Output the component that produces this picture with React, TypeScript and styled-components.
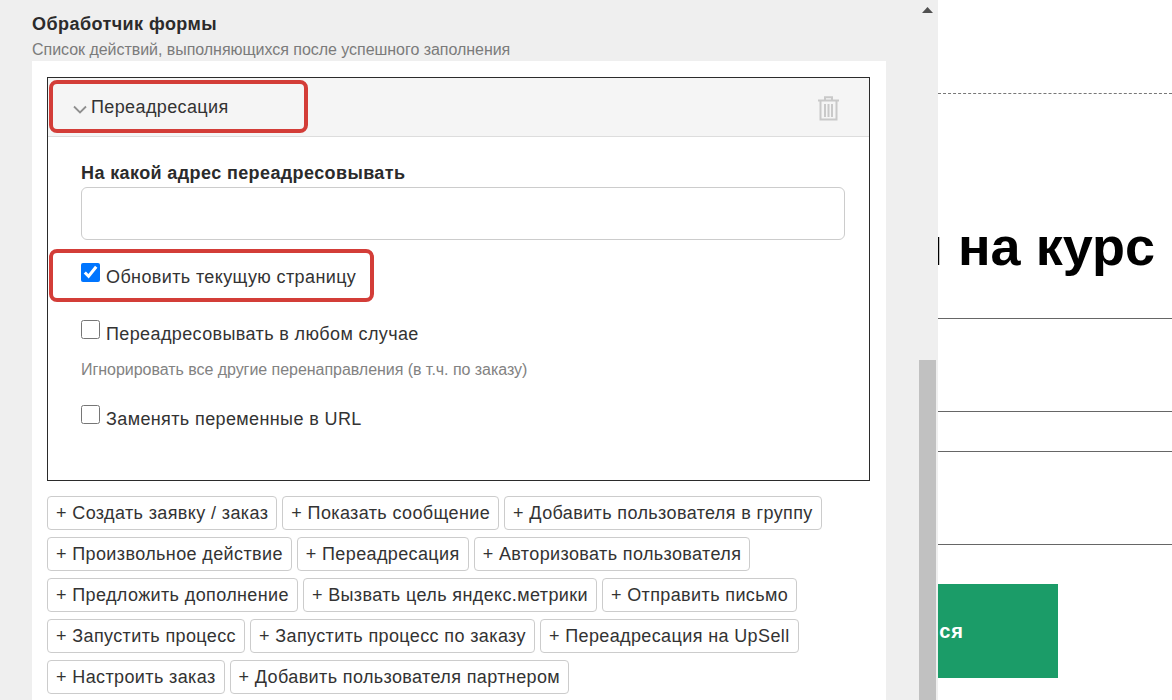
import React from "react";
import styled, { createGlobalStyle } from "styled-components";

const Global = createGlobalStyle`
  html, body { margin: 0; padding: 0; background: #fff; }
  body { font-family: "Liberation Sans", Arial, sans-serif; color: #333; overflow: hidden; }
  * { box-sizing: border-box; }
`;
const Page = styled.div`
  display: flex;
  width: 1172px;
  height: 700px;
  overflow: hidden;
`;
const Panel = styled.div`
  display: flex;
  width: 938px;
  height: 700px;
  flex: none;
  background: #efefef;
  position: relative;
  z-index: 1;
`;
const Content = styled.div`
  width: 919px;
  padding: 14px 33px 0 32px;
`;
const Title = styled.div`
  font-size: 18px;
  line-height: 21px;
  font-weight: 700;
  letter-spacing: 0.44px;
  color: #2b2b2b;
`;
const Subtitle = styled.div`
  font-size: 16px;
  line-height: 20px;
  margin-top: 5px;
  letter-spacing: -0.04px;
  color: #7b7b7b;
  height: 21px;
`;
const Card = styled.div`
  background: #fff;
  padding: 16px 16px 0 15px;
  height: 640px;
`;
const ActionBox = styled.div`
  position: relative;
  border: 1px solid #2b2b2b;
  height: 404px;
`;
const ActionHead = styled.div`
  display: flex;
  align-items: center;
  height: 59px;
  padding: 0 30px 0 25px;
  background: #f5f5f5;
  border-bottom: 1px solid #ddd;
  font-size: 18px;
  letter-spacing: 0.38px;
  color: #333;
`;
const Chevron = styled.svg`
  width: 14px;
  height: 9px;
  margin: 5px 4px 0 0;
  flex: none;
`;
const HeadTitle = styled.span`
  flex: 1;
`;
const Trash = styled.svg`
  width: 21px;
  height: 25px;
  flex: none;
  margin: 3px 0 0 0;
`;
const ActionBody = styled.div`
  padding: 25px 24px 0 33px;
`;
const Label = styled.div`
  font-size: 18px;
  font-weight: 700;
  line-height: 22px;
  letter-spacing: 0.39px;
  color: #2b2b2b;
`;
const TextInput = styled.input`
  display: block;
  width: 100%;
  height: 53px;
  margin-top: 3px;
  border: 1px solid #ccc;
  border-radius: 6px;
  background: #fff;
  outline: none;
`;
const CheckRow = styled.label<{ $top: number }>`
  display: flex;
  align-items: flex-start;
  margin-top: ${(p) => p.$top}px;
  font-size: 18px;
  line-height: 22px;
  letter-spacing: 0.38px;
  color: #333;
`;
const Check = styled.input`
  width: 19px;
  height: 19px;
  margin: 0 6px 0 0;
  flex: none;
  accent-color: #0075ff;
`;
const CheckText = styled.span`
  margin-top: 3px;
`;
const Hint = styled.div`
  font-size: 16px;
  line-height: 20px;
  margin-top: 15px;
  letter-spacing: -0.04px;
  color: #828282;
`;
const Marker = styled.div<{ $top: number; $width: number }>`
  position: absolute;
  left: 1px;
  top: ${(p) => p.$top}px;
  width: ${(p) => p.$width}px;
  height: 53px;
  border: 4.5px solid #d33d38;
  border-radius: 8px;
  pointer-events: none;
`;
const Buttons = styled.div`
  display: flex;
  flex-direction: column;
  gap: 7px;
  margin-top: 15px;
`;
const ButtonRow = styled.div`
  display: flex;
  gap: 5px;
`;
const AddButton = styled.button`
  height: 34px;
  padding: 0 8px;
  border: 1px solid #ccc;
  border-radius: 4px;
  background: #fff;
  font: 18px/20px "Liberation Sans", Arial, sans-serif;
  letter-spacing: 0.38px;
  color: #333;
  white-space: nowrap;
`;
const Track = styled.div`
  position: relative;
  width: 17px;
  height: 700px;
  flex: none;
`;
const ArrowUp = styled.svg`
  position: absolute;
  left: 3px;
  top: 7px;
  width: 11px;
  height: 6px;
`;
const Thumb = styled.div`
  position: absolute;
  left: 0;
  top: 360px;
  width: 17px;
  height: 340px;
  background: #c1c1c1;
`;
const Preview = styled.div`
  flex: 1;
  min-width: 0;
  overflow: hidden;
  background: #fff;
`;
const DashLine = styled.div`
  margin-top: 93px;
  border-top: 1px dashed #777;
  height: 1px;
  box-shadow: 0 3px 6px rgba(0, 0, 0, 0.04);
`;
const Heading = styled.div`
  display: flex;
  justify-content: flex-end;
  height: 102px;
  margin-top: 122px;
  padding-right: 17px;
  font: 700 54px/60px "Liberation Sans", Arial, sans-serif;
  color: #000;
  white-space: nowrap;
`;
const FieldLine = styled.div<{ $gap: number }>`
  border-top: 1px solid #666;
  height: 1px;
  margin-bottom: ${(p) => p.$gap}px;
`;
const SubmitWrap = styled.div`
  width: 120px;
  height: 94px;
  display: flex;
  align-items: center;
  justify-content: flex-end;
  padding-right: 94px;
  background: #1b9c68;
  color: #fff;
  font: 700 20px/24px "Liberation Sans", Arial, sans-serif;
  letter-spacing: 1px;
  white-space: nowrap;
`;

const rows = [
  ["+ Создать заявку / заказ", "+ Показать сообщение", "+ Добавить пользователя в группу"],
  ["+ Произвольное действие", "+ Переадресация", "+ Авторизовать пользователя"],
  ["+ Предложить дополнение", "+ Вызвать цель яндекс.метрики", "+ Отправить письмо"],
  ["+ Запустить процесс", "+ Запустить процесс по заказу", "+ Переадресация на UpSell"],
  ["+ Настроить заказ", "+ Добавить пользователя партнером"],
];

export default function App() {
  return (
    <Page>
      <Global />
      <Panel>
        <Content>
          <Title>Обработчик формы</Title>
          <Subtitle>Список действий, выполняющихся после успешного заполнения</Subtitle>
          <Card>
            <ActionBox>
              <ActionHead>
                <Chevron viewBox="0 0 14 9" fill="none" stroke="#8f8f8f" strokeWidth="1.8">
                  <path d="M1 1.5l6 6 6-6" />
                </Chevron>
                <HeadTitle>Переадресация</HeadTitle>
                <Trash viewBox="0 0 21 25" fill="none" stroke="#c9c9c9" strokeWidth="2">
                  <path d="M0 4.5h21M7 4V1.2h7V4M2.5 5v18.5h16V5" />
                  <path d="M7 8v13M10.5 8v13M14 8v13" />
                </Trash>
              </ActionHead>
              <ActionBody>
                <Label>На какой адрес переадресовывать</Label>
                <TextInput type="text" />
                <CheckRow $top={23}>
                  <Check type="checkbox" defaultChecked />
                  <CheckText>Обновить текущую страницу</CheckText>
                </CheckRow>
                <CheckRow $top={32}>
                  <Check type="checkbox" />
                  <CheckText>Переадресовывать в любом случае</CheckText>
                </CheckRow>
                <Hint>Игнорировать все другие перенаправления (в т.ч. по заказу)</Hint>
                <CheckRow $top={25}>
                  <Check type="checkbox" />
                  <CheckText>Заменять переменные в URL</CheckText>
                </CheckRow>
              </ActionBody>
              <Marker $top={2} $width={259} />
              <Marker $top={171} $width={325} />
            </ActionBox>
            <Buttons>
              {rows.map((row, i) => (
                <ButtonRow key={i}>
                  {row.map((t) => (
                    <AddButton key={t}>{t}</AddButton>
                  ))}
                </ButtonRow>
              ))}
            </Buttons>
          </Card>
        </Content>
        <Track>
          <ArrowUp viewBox="0 0 11 6">
            <path d="M5.5 0L11 6H0z" fill="#505050" />
          </ArrowUp>
          <Thumb />
        </Track>
      </Panel>
      <Preview>
        <DashLine />
        <Heading>Регистрация на курс</Heading>
        <FieldLine $gap={92} />
        <FieldLine $gap={39} />
        <FieldLine $gap={92} />
        <FieldLine $gap={39} />
        <SubmitWrap>Записаться</SubmitWrap>
      </Preview>
    </Page>
  );
}
